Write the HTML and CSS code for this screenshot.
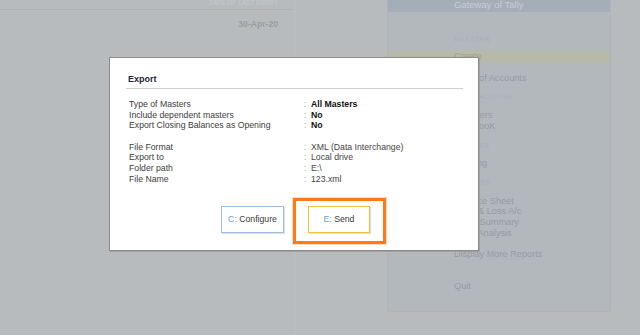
FILE: index.html
```html
<!DOCTYPE html>
<html lang="en">
<head>
  <meta charset="UTF-8">
  <title>Export</title>
  <link rel="stylesheet" href="styles.css">
</head>
<body>
  <div class="screen">
    <div class="company-pane">
      <div class="col-head">Date of Last Entry</div>
      <div class="col-value">30-Apr-20</div>
    </div>
    <div class="spacer-pane"></div>
    <div class="gateway">
      <div class="gateway-title">Gateway of Tally</div>
      <div class="menu-group">Masters</div>
      <div class="menu-item selected">Create</div>
      <div class="menu-item first">Chart of Accounts</div>
      <div class="menu-group">Transactions</div>
      <div class="menu-item first">Vouchers</div>
      <div class="menu-item">Day Boo<span class="hot">K</span></div>
      <div class="menu-group">Utilities</div>
      <div class="menu-item first">Banking</div>
      <div class="menu-group">Reports</div>
      <div class="menu-item first">Balance Sheet</div>
      <div class="menu-item">Profit &amp; Loss A/c</div>
      <div class="menu-item">Stock Summary</div>
      <div class="menu-item">Ratio Analysis</div>
      <div class="menu-item more">Display More Reports</div>
      <div class="menu-item quit">Quit</div>
    </div>
  </div>

  <div class="dialog">
    <div class="dialog-title">Export</div>
    <div class="fields">
      <span class="lbl">Type of Masters</span><span class="sep">:</span><span class="val strong">All Masters</span>
      <span class="lbl">Include dependent masters</span><span class="sep">:</span><span class="val strong">No</span>
      <span class="lbl">Export Closing Balances as Opening</span><span class="sep">:</span><span class="val strong">No</span>
    </div>
    <div class="fields second">
      <span class="lbl">File Format</span><span class="sep">:</span><span class="val">XML (Data Interchange)</span>
      <span class="lbl">Export to</span><span class="sep">:</span><span class="val">Local drive</span>
      <span class="lbl">Folder path</span><span class="sep">:</span><span class="val">E:\</span>
      <span class="lbl">File Name</span><span class="sep">:</span><span class="val">123.xml</span>
    </div>
    <div class="actions">
      <button class="btn btn-config"><span class="key">C:</span> Configure</button>
      <button class="btn btn-send"><span class="key">E:</span> Send</button>
    </div>
  </div>

  <div class="focus-ring"></div>
</body>
</html>
```

FILE: styles.css
```css
html, body { margin: 0; padding: 0; }
body { width: 640px; height: 335px; overflow: hidden; background: #b7bbbe; font-family: "Liberation Sans", Arial, sans-serif; position: relative; }

.screen { display: flex; height: 335px; }

.company-pane { width: 294px; border-right: 1px solid #bcc0c3; text-align: right; }
.col-head { height: 7px; padding: 0 16px 2px 0; border-bottom: 1px solid #adb2b6; font-size: 6.5px; line-height: 5px; text-transform: uppercase; color: #c4c8cc; overflow: hidden; }
.col-value { margin-top: 9px; padding-right: 16px; font-size: 8.6px; line-height: 10px; font-weight: bold; color: #9a9ea2; }

.spacer-pane { width: 92px; }

.gateway { width: 222px; height: 311px; background: #b3b8bd; border: 1px solid #aeb4ba; border-top: none; }
.gateway-title { height: 12px; background: #a4aeb9; color: #c6cdd5; font-size: 9.5px; line-height: 9px; padding-left: 66px; }
.menu-group { margin-top: 9px; padding-left: 66px; font-size: 7px; line-height: 10.7px; text-transform: uppercase; letter-spacing: 0.3px; color: #a9afb5; }
.gateway-title + .menu-group { margin-top: 22.5px; }
.menu-item { padding-left: 66px; font-size: 9.2px; line-height: 10.7px; color: #959ca3; }
.menu-item.first { margin-top: 7px; }
.menu-item.selected { margin-top: 6px; background: #b8b9a7; color: #9fa18f; line-height: 11px; }
.selected + .menu-item.first { margin-top: 10.5px; }
.menu-item .hot { color: #8c9bb0; }
.menu-item.more { margin-top: 10.6px; }
.menu-item.quit { margin-top: 21.3px; }

.dialog { position: absolute; left: 109px; top: 57px; width: 370px; height: 194px; box-sizing: border-box; background: #fff; border: 1px solid #8c8c8c; box-shadow: 1px 1px 0 #a0a0a0; }
.dialog-title { margin: 15.5px 15px 0 16px; padding: 0 0 3px 2px; border-bottom: 1px solid #cfcfcf; font-size: 9px; line-height: 11px; font-weight: bold; color: #1b2440; }

.fields { display: grid; grid-template-columns: 175px 7px 1fr; grid-auto-rows: 10.7px; margin: 10.5px 0 0 19px; font-size: 8.7px; line-height: 10.7px; color: #3d3d3d; }
.fields.second { margin-top: 10.7px; }
.sep { color: #a6a6a6; }
.val { color: #444; }
.val.strong { font-weight: bold; color: #111; }

.actions { display: flex; justify-content: center; gap: 24px; margin-top: 21.4px; padding-left: 3px; }
.btn { height: 27px; padding: 0; background: #fff; font-family: inherit; font-size: 8.7px; color: #3a3a3a; box-shadow: 1px 1px 1px rgba(0,0,0,0.12); }
.btn-config { width: 63px; border: 1px solid #9bbde0; }
.btn-send { width: 62px; border: 1px solid #f5c03a; }
.key { color: #6f9fd4; }

.focus-ring { position: absolute; left: 293px; top: 198px; width: 93px; height: 46px; box-sizing: border-box; border: 3px solid #ff7a18; box-shadow: 0 0 0 1px rgba(255,150,80,0.35); }
```
